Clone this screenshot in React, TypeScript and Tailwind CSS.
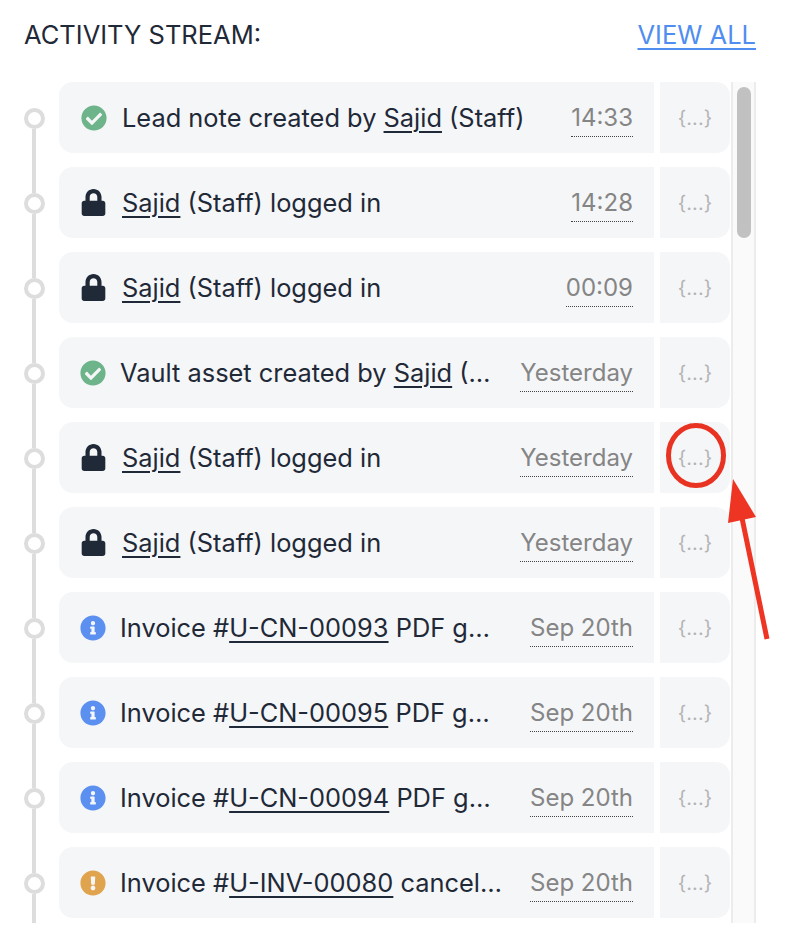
import { FaCheckCircle, FaExclamationCircle, FaInfoCircle, FaLock } from "react-icons/fa";

type Kind = "ok" | "lock" | "info" | "warn";

const rows: { kind: Kind; before?: string; link: string; after: string; time: string }[] = [
  { kind: "ok", before: "Lead note created by ", link: "Sajid", after: " (Staff)", time: "14:33" },
  { kind: "lock", link: "Sajid", after: " (Staff) logged in", time: "14:28" },
  { kind: "lock", link: "Sajid", after: " (Staff) logged in", time: "00:09" },
  { kind: "ok", before: "Vault asset created by ", link: "Sajid", after: " (Staff)", time: "Yesterday" },
  { kind: "lock", link: "Sajid", after: " (Staff) logged in", time: "Yesterday" },
  { kind: "lock", link: "Sajid", after: " (Staff) logged in", time: "Yesterday" },
  { kind: "info", before: "Invoice #", link: "U-CN-00093", after: " PDF generated", time: "Sep 20th" },
  { kind: "info", before: "Invoice #", link: "U-CN-00095", after: " PDF generated", time: "Sep 20th" },
  { kind: "info", before: "Invoice #", link: "U-CN-00094", after: " PDF generated", time: "Sep 20th" },
  { kind: "warn", before: "Invoice #", link: "U-INV-00080", after: " cancelled by", time: "Sep 20th" },
];

function RowIcon({ kind, first }: { kind: Kind; first: boolean }) {
  if (kind === "ok")
    return <FaCheckCircle className={`size-[26px] shrink-0 text-[#6db48a] ${first ? "mx-[1px]" : ""}`} />;
  if (kind === "lock") return <FaLock className="mr-[1px] size-[27px] shrink-0 text-[#1f2937]" />;
  if (kind === "info") return <FaInfoCircle className="size-[26px] shrink-0 text-[#5b8ff0]" />;
  return <FaExclamationCircle className="size-[26px] shrink-0 text-[#e0a44e]" />;
}

export default function App() {
  return (
    <div className="relative h-[950px] w-[798px] overflow-hidden bg-white font-['Inter',sans-serif] text-[#1f2937]">
      <div className="flex h-[82px] w-[756px] items-start justify-between pl-[24px] pt-[19px]">
        <h2 className="text-[25.5px] leading-[32px] font-normal">ACTIVITY STREAM:</h2>
        <a className="text-[25.5px] leading-[32px] text-[#4f8df0] underline decoration-2 underline-offset-[4px]">
          VIEW ALL
        </a>
      </div>

      <div className="flex h-[841px] w-[756px] overflow-hidden pl-[23px]">
        <div className="flex w-[708px] flex-col">
          {rows.map((row, i) => (
            <div key={i} className="flex h-[85px] shrink-0">
              <div className="flex w-[22px] flex-col items-center">
                <div className={`h-[26px] w-[4px] ${i === 0 ? "bg-transparent" : "bg-[#dddddd]"}`} />
                <div className="size-[21px] shrink-0 rounded-full border-[4px] border-[#dddddd] bg-white" />
                <div className="w-[4px] flex-1 bg-[#dddddd]" />
              </div>
              <div className="ml-[14px] flex h-[71px] w-[595px] items-center gap-[14px] rounded-l-[14px] bg-[#f5f6f8] pl-[21px] pr-[21px]">
                <RowIcon kind={row.kind} first={i === 0} />
                <p className="mr-[13px] min-w-0 flex-1 truncate text-[25.4px] leading-[32px]">
                  {row.before}
                  <a className="underline decoration-2 underline-offset-[4px]">{row.link}</a>
                  {row.after}
                </p>
                <span className="mt-[5px] shrink-0 border-b border-dotted border-[#444444] pb-[4px] text-[24px] leading-[29px] text-[#858585]">
                  {row.time}
                </span>
              </div>
              <div className="ml-[6px] flex h-[71px] w-[70px] items-center justify-center rounded-r-[14px] bg-[#f5f6f8] text-[20px] text-[#b4b4b4]">
                {"{...}"}
              </div>
            </div>
          ))}
        </div>
        <div className="ml-[1px] w-[25px] border-x-2 border-[#ececec] bg-[#fafafa] pl-[4px] pt-[5px]">
          <div className="h-[151px] w-[14px] rounded-full bg-[#c1c1c1]" />
        </div>
      </div>

      {/* red annotation drawn over the screenshot */}
      <svg className="absolute left-0 top-0 pointer-events-none" width="798" height="950">
        <ellipse cx="696" cy="455.5" rx="27.5" ry="30" fill="none" stroke="#e83323" strokeWidth="5" />
        <path d="M767 639 L742 518" stroke="#ee3524" strokeWidth="5" fill="none" />
        <polygon points="733,479 756,517 728,523" fill="#ee3524" />
      </svg>
    </div>
  );
}
